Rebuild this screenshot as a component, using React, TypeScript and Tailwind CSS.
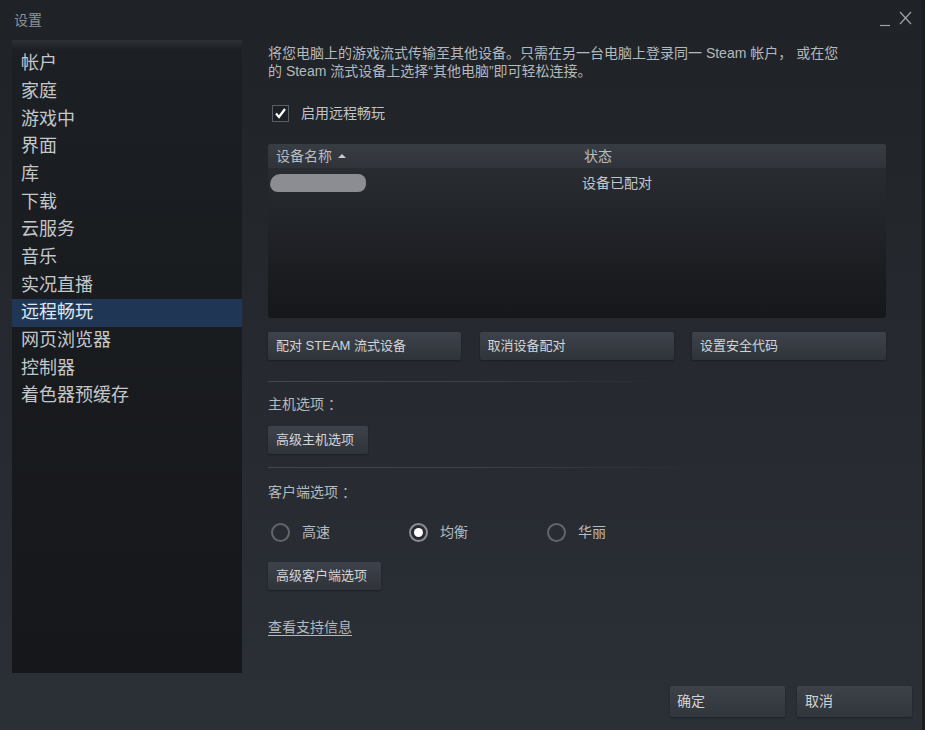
import React from "react";

const font = { fontFamily: '"Liberation Sans", "Noto Sans CJK SC", sans-serif' };

const navItems = ["帐户", "家庭", "游戏中", "界面", "库", "下载", "云服务", "音乐", "实况直播", "远程畅玩", "网页浏览器", "控制器", "着色器预缓存"];

function Btn({ label, className }: { label: string; className: string }) {
  return (
    <div className={`flex items-center rounded-[2px] bg-gradient-to-b from-[#3e424a] to-[#2f333a] pl-[8px] text-[13px] text-[#d2d5d8] shadow-[0_1px_2px_rgba(0,0,0,0.35)] ${className}`}>
      {label}
    </div>
  );
}

function Radio({ label, checked }: { label: string; checked?: boolean }) {
  return (
    <div className="flex h-[20px] w-[138px] items-center">
      <div className={`ml-[3px] flex h-[19px] w-[19px] items-center justify-center rounded-full border-2 ${checked ? "border-[#8a8e94]" : "border-[#62666c]"}`}>
        {checked && <div className="h-[9px] w-[9px] rounded-full bg-white" />}
      </div>
      <span className="ml-[12px] text-[14px] text-[#b7bbbf]">{label}</span>
    </div>
  );
}

export default function App() {
  return (
    <div style={font} className="flex h-[730px] w-[925px] flex-col overflow-hidden bg-gradient-to-b from-[#1f2226] via-[#262a30] to-[#2b2f36] border-r-[3px] border-[#1a1c20]">
      {/* title bar */}
      <div className="flex h-[40px] shrink-0 items-center justify-between pl-[14px] pr-[8px]">
        <span className="text-[14px] text-[#8d9298]">设置</span>
        <svg width="36" height="20" viewBox="0 0 36 20" className="mb-[3px]">
          <line x1="2" y1="16.5" x2="12" y2="16.5" stroke="#9ea2a7" strokeWidth="1.2" />
          <line x1="22" y1="3" x2="33" y2="15" stroke="#9ea2a7" strokeWidth="1.2" />
          <line x1="33" y1="3" x2="22" y2="15" stroke="#9ea2a7" strokeWidth="1.2" />
        </svg>
      </div>

      <div className="flex">
        {/* sidebar */}
        <div className="ml-[12px] h-[633px] w-[230px] shrink-0 bg-gradient-to-b from-[#1c1f23] to-[#15171a]">
          <div className="h-[10px] bg-gradient-to-b from-[#2d3036] to-[#1c1f23]" />
          {navItems.map((n) => (
            <div
              key={n}
              className={`flex h-[27.67px] items-center pl-[9px] text-[18px] ${n === "远程畅玩" ? "bg-[#1f3754] text-[#dfe6ee]" : "text-[#c4c7ca]"}`}
            >
              {n}
            </div>
          ))}
        </div>

        {/* content */}
        <div className="ml-[26px] flex w-[618px] flex-col pt-[4px]">
          <div className="text-[14px] leading-[18px] text-[#b5b9bd]">
            <div>将您电脑上的游戏流式传输至其他设备。只需在另一台电脑上登录同一 Steam 帐户， 或在您</div>
            <div>的 Steam 流式设备上选择“其他电脑”即可轻松连接。</div>
          </div>

          <div className="mt-[24px] flex h-[18px] items-center">
            <div className="ml-[4px] flex h-[17px] w-[17px] items-center justify-center border border-[#5a5e65] bg-[#1d2024]">
              <svg width="13" height="13" viewBox="0 0 13 13">
                <path d="M2 6.5 L5 10 L11 2" fill="none" stroke="#ffffff" strokeWidth="2.2" />
              </svg>
            </div>
            <span className="ml-[12px] text-[14px] text-[#c0c3c7]">启用远程畅玩</span>
          </div>

          {/* device table */}
          <div className="mt-[22px] flex h-[174px] flex-col overflow-hidden rounded-[3px] bg-gradient-to-b from-[#2c2f35] to-[#15171a]">
            <div className="flex h-[24px] shrink-0 items-center bg-gradient-to-b from-[#383c43] to-[#30343a] text-[14px] text-[#b9bdc1]">
              <div className="flex w-[316px] items-center pl-[8px]">
                设备名称
                <svg width="10" height="8" viewBox="0 0 10 8" className="ml-[5px]">
                  <path d="M1 6 L5 2 L9 6 Z" fill="#c8cbce" />
                </svg>
              </div>
              <div>状态</div>
            </div>
            <div className="flex h-[30px] items-center text-[14px] text-[#c3c6ca]">
              <div className="w-[314px] pl-[2px]">
                <div className="h-[18px] w-[96px] rounded-[9px] rounded-tl-[12px] bg-[#8c8d92] blur-[0.6px]" />
              </div>
              <div>设备已配对</div>
            </div>
          </div>

          <div className="mt-[14px] flex justify-between">
            <Btn label="配对 STEAM 流式设备" className="h-[28px] w-[193px]" />
            <Btn label="取消设备配对" className="h-[28px] w-[194px]" />
            <Btn label="设置安全代码" className="h-[28px] w-[194px]" />
          </div>

          <div className="mt-[21px] h-[1px] w-[400px] bg-gradient-to-r from-[#42464d] via-[#3c4047] to-transparent" />

          <div className="mt-[13px] text-[14px] leading-[18px] text-[#b5b9bd]">主机选项 ：</div>
          <Btn label="高级主机选项" className="mt-[13px] h-[28px] w-[100px]" />

          <div className="mt-[13px] h-[1px] w-[437px] bg-gradient-to-r from-[#42464d] via-[#3c4047] to-transparent" />

          <div className="mt-[15px] text-[14px] leading-[18px] text-[#b5b9bd]">客户端选项 ：</div>
          <div className="mt-[21px] flex">
            <Radio label="高速" />
            <Radio label="均衡" checked />
            <Radio label="华丽" />
          </div>
          <Btn label="高级客户端选项" className="mt-[20px] h-[28px] w-[113px]" />

          <div className="mt-[28px] text-[14px] leading-[18px] text-[#b5b9bd] underline underline-offset-[3px]">查看支持信息</div>
        </div>
      </div>

      {/* bottom buttons */}
      <div className="mt-[13px] flex justify-end gap-[12px] pr-[10px]">
        <div className="flex h-[31px] w-[115px] items-center rounded-[2px] bg-gradient-to-b from-[#3d4148] to-[#31353c] pl-[7px] text-[14px] text-[#d0d3d6] shadow-[0_1px_2px_rgba(0,0,0,0.35)]">确定</div>
        <div className="flex h-[31px] w-[115px] items-center rounded-[2px] bg-gradient-to-b from-[#3d4148] to-[#31353c] pl-[8px] text-[14px] text-[#d0d3d6] shadow-[0_1px_2px_rgba(0,0,0,0.35)]">取消</div>
      </div>
    </div>
  );
}
